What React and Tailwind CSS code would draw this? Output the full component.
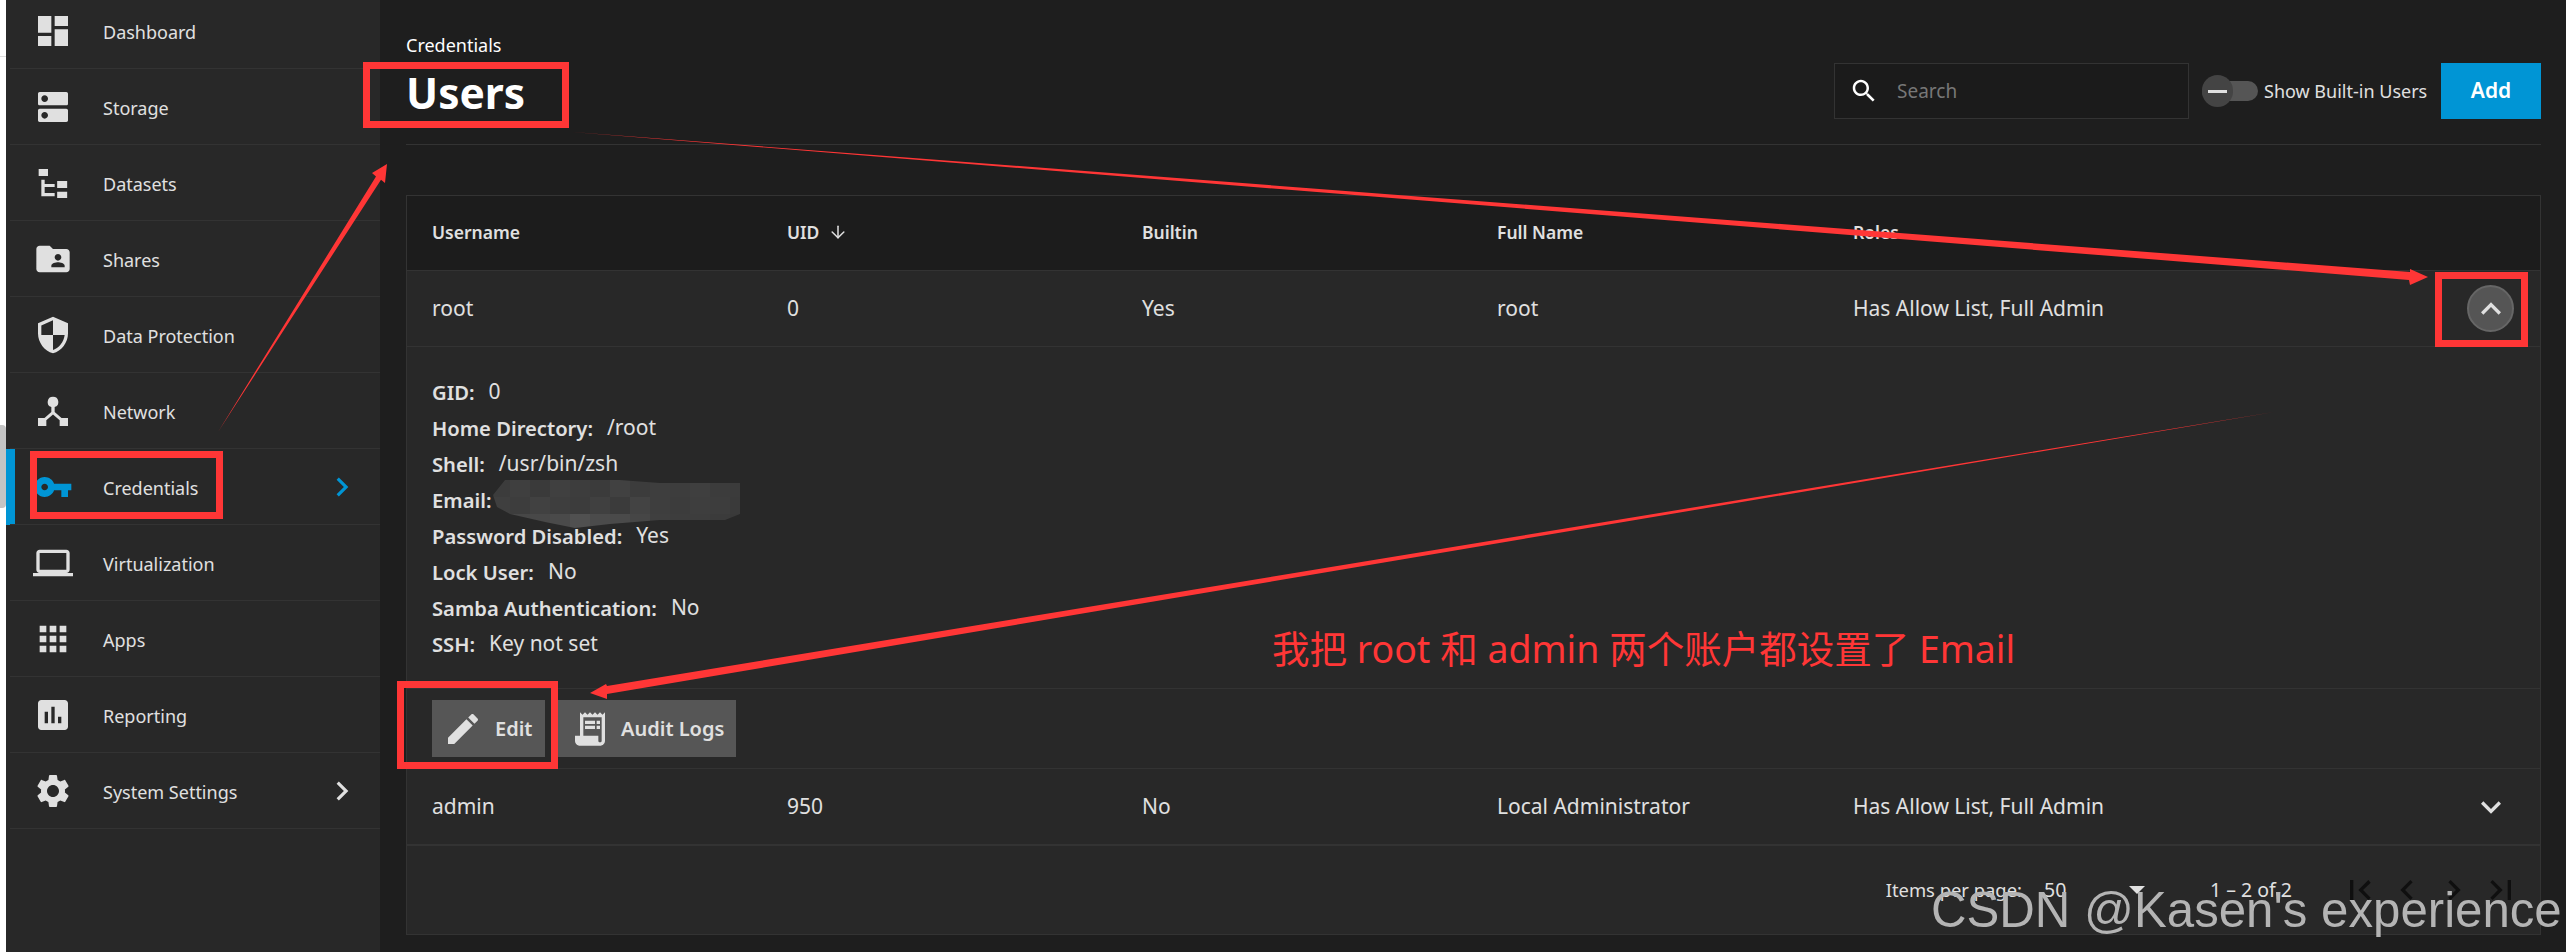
import React from 'react';
import { ArrowDown } from 'lucide-react';

const font = { fontFamily: '"Noto Sans", "Noto Sans CJK SC", sans-serif' };

const Icon = ({ d, size = 40, className = '', evenodd = false }) => (
  <svg width={size} height={size} viewBox="0 0 24 24" className={`shrink-0 fill-current ${className}`}>
    <path d={d} fillRule={evenodd ? 'evenodd' : 'nonzero'} />
  </svg>
);

const paths = {
  dashboard: 'M3 13h8V3H3v10zm0 8h8v-6H3v6zm10 0h8V11h-8v10zm0-18v6h8V3h-8z',
  storage:
    'M20 13H4c-.55 0-1 .45-1 1v6c0 .55.45 1 1 1h16c.55 0 1-.45 1-1v-6c0-.55-.45-1-1-1zM7 19c-1.1 0-2-.9-2-2s.9-2 2-2 2 .9 2 2-.9 2-2 2zM20 3H4c-.55 0-1 .45-1 1v6c0 .55.45 1 1 1h16c.55 0 1-.45 1-1V4c0-.55-.45-1-1-1zM7 9c-1.1 0-2-.9-2-2s.9-2 2-2 2 .9 2 2-.9 2-2 2z',
  datasets:
    'M3.4 3.6H9v4.2H3.4zM5 10h2v2.6h6v1.8H7V18h6v2H5zM14.5 10.8h6V15h-6zM14.5 17.2h6V21h-6z',
  shares:
    'M20 6h-8l-2-2H4c-1.1 0-1.99.9-1.99 2L2 18c0 1.1.9 2 2 2h16c1.1 0 2-.9 2-2V8c0-1.1-.9-2-2-2zm-5 3c1.1 0 2 .9 2 2s-.9 2-2 2-2-.9-2-2 .9-2 2-2zm4 8h-8v-1c0-1.33 2.67-2 4-2s4 .67 4 2v1z',
  protection:
    'M12 1L3 5v6c0 5.55 3.84 10.74 9 12 5.16-1.26 9-6.45 9-12V5l-9-4zm0 10.99h7c-.53 4.12-3.28 7.79-7 8.94V12H5V6.3l7-3.11v8.8z',
  network:
    'M12 3.4a3.2 3.2 0 0 1 1 6.24v2.9l4.1 3.66H21V21h-5v-3.4l-4-3.55-4 3.55V21H3v-4.8h3.9L11 12.54v-2.9A3.2 3.2 0 0 1 12 3.4z',
  key: 'M12.65 10C11.83 7.67 9.61 6 7 6c-3.31 0-6 2.69-6 6s2.69 6 6 6c2.61 0 4.83-1.67 5.65-4H17v4h4v-4h2v-4H12.65zM7 14c-1.1 0-2-.9-2-2s.9-2 2-2 2 .9 2 2-.9 2-2 2z',
  laptop:
    'M20 18c1.1 0 1.99-.9 1.99-2L22 6c0-1.1-.9-2-2-2H4c-1.1 0-2 .9-2 2v10c0 1.1.9 2 2 2H0v2h24v-2h-4zM4 6h16v10H4V6z',
  apps: 'M4 8h4V4H4v4zm6 12h4v-4h-4v4zm-6 0h4v-4H4v4zm0-6h4v-4H4v4zm6 0h4v-4h-4v4zm6-10v4h4V4h-4zm-6 4h4V4h-4v4zm6 6h4v-4h-4v4zm0 6h4v-4h-4v4z',
  reporting:
    'M19 3H5c-1.1 0-2 .9-2 2v14c0 1.1.9 2 2 2h14c1.1 0 2-.9 2-2V5c0-1.1-.9-2-2-2zM9 17H7v-7h2v7zm4 0h-2V7h2v10zm4 0h-2v-4h2v4z',
  settings:
    'M19.14 12.94c.04-.3.06-.61.06-.94 0-.32-.02-.64-.07-.94l2.03-1.58c.18-.14.23-.41.12-.61l-1.92-3.32c-.12-.22-.37-.29-.59-.22l-2.39.96c-.5-.38-1.03-.7-1.62-.94l-.36-2.54c-.04-.24-.24-.41-.48-.41h-3.84c-.24 0-.43.17-.47.41l-.36 2.54c-.59.24-1.13.57-1.62.94l-2.39-.96c-.22-.08-.47 0-.59.22L2.74 8.87c-.12.21-.08.47.12.61l2.03 1.58c-.05.3-.09.63-.09.94s.02.64.07.94l-2.03 1.58c-.18.14-.23.41-.12.61l1.92 3.32c.12.22.37.29.59.22l2.39-.96c.5.38 1.03.7 1.62.94l.36 2.54c.05.24.24.41.48.41h3.84c.24 0 .44-.17.47-.41l.36-2.54c.59-.24 1.13-.56 1.62-.94l2.39.96c.22.08.47 0 .59-.22l1.92-3.32c.12-.22.07-.47-.12-.61l-2.01-1.58zM12 15.6c-1.98 0-3.6-1.62-3.6-3.6s1.62-3.6 3.6-3.6 3.6 1.62 3.6 3.6-1.62 3.6-3.6 3.6z',
  chevronRight: 'M10 6L8.59 7.41 13.17 12l-4.58 4.59L10 18l6-6z',
  chevronLeft: 'M15.41 7.41L14 6l-6 6 6 6 1.41-1.41L10.83 12z',
  expandLess: 'M12 8l-6 6 1.41 1.41L12 10.83l4.59 4.58L18 14z',
  expandMore: 'M16.59 8.59L12 13.17 7.41 8.59 6 10l6 6 6-6z',
  firstPage: 'M18.41 16.59L13.82 12l4.59-4.41L17 6l-6 6 6 6zM6 6h2v12H6z',
  lastPage: 'M5.59 7.41L10.18 12l-4.59 4.59L7 18l6-6-6-6zM16 6h2v12h-2z',
  search:
    'M15.5 14h-.79l-.28-.27C15.41 12.59 16 11.11 16 9.5 16 5.91 13.09 3 9.5 3S3 5.91 3 9.5 5.91 16 9.5 16c1.61 0 3.09-.59 4.23-1.57l.27.28v.79l5 4.99L20.49 19l-4.99-5zm-6 0C7.01 14 5 11.99 5 9.5S7.01 5 9.5 5 14 7.01 14 9.5 11.99 14 9.5 14z',
  edit: 'M3 17.25V21h3.75L17.81 9.94l-3.75-3.75L3 17.25zM20.71 7.04c.39-.39.39-1.02 0-1.41l-2.34-2.34c-.39-.39-1.02-.39-1.41 0l-1.83 1.83 3.75 3.75 1.83-1.83z',
  audit:
    'M19.5 3.5L18 2l-1.5 1.5L15 2l-1.5 1.5L12 2l-1.5 1.5L9 2 7.5 3.5 6 2v14H3v3c0 1.66 1.34 3 3 3h12c1.66 0 3-1.34 3-3V2l-1.5 1.5zM19 19c0 .55-.45 1-1 1s-1-.45-1-1v-3H8V5h11v14zM9 7h6v2H9zM16 7h2v2h-2zM9 10h6v2H9zM16 10h2v2h-2z',
};

const navItems = [
  { label: 'Dashboard', icon: paths.dashboard },
  { label: 'Storage', icon: paths.storage, evenodd: true },
  { label: 'Datasets', icon: paths.datasets },
  { label: 'Shares', icon: paths.shares },
  { label: 'Data Protection', icon: paths.protection },
  { label: 'Network', icon: paths.network },
  { label: 'Credentials', icon: paths.key, active: true, arrow: true },
  { label: 'Virtualization', icon: paths.laptop },
  { label: 'Apps', icon: paths.apps },
  { label: 'Reporting', icon: paths.reporting },
  { label: 'System Settings', icon: paths.settings, arrow: true },
];

const details = [
  ['GID:', '0'],
  ['Home Directory:', '/root'],
  ['Shell:', '/usr/bin/zsh'],
  ['Email:', ''],
  ['Password Disabled:', 'Yes'],
  ['Lock User:', 'No'],
  ['Samba Authentication:', 'No'],
  ['SSH:', 'Key not set'],
];

const mosaic = [
  ['#3c3c3c', '#3f3f3f', '#3a3a3a', '#404040', '#3d3d3d', '#3b3b3b', '#414141', '#3c3c3c', '#3e3e3e', '#3d3d3d', '#3f3f3f', '#3c3c3c', '#3b3b3b'],
  ['#3f3f3f', '#3d3d3d', '#414141', '#3e3e3e', '#3c3c3c', '#404040', '#3b3b3b', '#434343', '#3e3e3e', '#3c3c3c', '#3e3e3e', '#3d3d3d', '#3a3a3a'],
  ['#444444', '#474747', '#484848', '#4a4a4a', '#505050', '#4b4b4b', '#4a4a4a', '#464646', '#3f3f3f', '#3d3d3d', '#3d3d3d', '#3b3b3b', '#393939'],
];

const Row = ({ cells, children }) => (
  <div className="grid h-[76px] grid-cols-[355px_355px_355px_356px_1fr] items-center border-b border-[#333333] bg-[#282828] pl-[25px] text-[21px] text-[#e0e0e0]">
    {cells.map((c) => (
      <div key={c}>{c}</div>
    ))}
    {children}
  </div>
);

const Annotations = () => (
  <svg width="2566" height="952" viewBox="0 0 2566 952" className="pointer-events-none absolute left-0 top-0">
    <g fill="none" stroke="#ff3636" strokeWidth="7">
      <rect x="366.5" y="65.5" width="199" height="59" />
      <rect x="33.5" y="454.5" width="186" height="61" />
      <rect x="400.5" y="684.5" width="154" height="81" />
      <rect x="2438.5" y="275.5" width="86" height="68" />
    </g>
    <g fill="#ff3636">
      <polygon points="572,132 2410,272 2410,269 2428,277 2410,285 2409,280" />
      <polygon points="2274,412 607,694 607,699 590,693 606,684 607,686" />
      <polygon points="218,432 376,176.5 372,173 387,164 385,183 381,179.7" />
    </g>
    <defs>
      <clipPath id="blur-shape">
        <path d="M505 480 H620 L660 483 H740 V514 L725 520 H660 L610 524 L575 528 L545 522 L510 514 L497 507 L493 495 Z" />
      </clipPath>
    </defs>
    <g clipPath="url(#blur-shape)">
      {mosaic.map((row, r) =>
        row.map((color, c) => <rect key={`${r}-${c}`} x={490 + c * 20} y={480 + r * 17} width="20" height="17" fill={color} />),
      )}
    </g>
  </svg>
);

export default function App() {
  return (
    <div className="relative flex h-[952px] w-[2566px] overflow-hidden bg-[#1e1e1e]" style={font}>
      <div className="relative w-[6px] shrink-0 bg-white">
        <div className="absolute left-0 top-[56px] h-px w-full bg-[#dddddd]" />
        <div className="absolute left-0 top-[425px] h-[83px] w-full rounded-r-[4px] bg-[#c4c4c4]" />
      </div>

      <aside className="h-full w-[374px] shrink-0 bg-[#282828]">
        <nav className="-mt-[7px]">
          {navItems.map((item) => (
            <div key={item.label} className="relative flex h-[76px] items-center pl-[27px] text-[18px] text-[#e0e0e0]">
              {item.active && <div className="absolute bottom-0 left-0 top-0 w-[9px] bg-[#0095d5]" />}
              <div className="absolute bottom-0 left-[4px] right-0 h-px bg-[#333333]" />
              <Icon d={item.icon} evenodd={item.evenodd} className={item.active ? 'text-[#0095d5]' : 'text-[#e0e0e0]'} />
              <span className="ml-[30px] mt-[2px]">{item.label}</span>
              {item.arrow && (
                <Icon
                  d={paths.chevronRight}
                  size={38}
                  className={`absolute left-[317px] ${item.active ? 'text-[#0095d5]' : 'text-[#e0e0e0]'}`}
                />
              )}
            </div>
          ))}
        </nav>
      </aside>

      <main className="min-w-0 flex-1 pl-[26px] pr-[25px]">
        <header className="flex h-[145px] items-start justify-between border-b border-[#333333]">
          <div className="pt-[32px] text-white">
            <div className="text-[18px] leading-[26px]">Credentials</div>
            <h1 className="mt-[5px] text-[42.5px] font-bold leading-[60px]">Users</h1>
          </div>
          <div className="flex items-center pt-[63px]">
            <div className="flex h-[56px] w-[355px] items-center border border-[#333333] bg-[#1b1b1b] pl-[14px] text-[19px] text-[#777777]">
              <Icon d={paths.search} size={30} className="text-white" />
              <span className="ml-[18px]">Search</span>
            </div>
            <div className="relative ml-[13px] h-[20px] w-[56px] rounded-full bg-[#555555]">
              <div className="absolute left-0 top-[-6px] flex h-[32px] w-[31px] items-center justify-center rounded-full bg-[#444444]">
                <div className="h-[3px] w-[19px] bg-[#e0e0e0]" />
              </div>
            </div>
            <span className="ml-[6px] w-[177px] whitespace-nowrap text-[18px] text-[#e0e0e0]">Show Built-in Users</span>
            <button className="h-[56px] w-[100px] bg-[#0095d5] text-[21px] font-semibold text-white">Add</button>
          </div>
        </header>

        <section className="mt-[50px] border border-[#333333] bg-[#282828]">
          <div className="grid h-[75px] grid-cols-[355px_355px_355px_356px_1fr] items-center border-b border-[#333333] bg-[#1c1c1c] pb-[2px] pl-[25px] text-[17.5px] font-semibold text-[#e0e0e0]">
            <div>Username</div>
            <div className="flex items-center gap-[9px]">
              UID <ArrowDown size={20} strokeWidth={1.8} />
            </div>
            <div>Builtin</div>
            <div>Full Name</div>
            <div>Roles</div>
          </div>

          <Row cells={['root', '0', 'Yes', 'root', 'Has Allow List, Full Admin']}>
            <div className="absolute left-[2467px] flex h-[47px] w-[47px] items-center justify-center rounded-full border-2 border-[#666666] bg-[#555555]">
              <Icon d={paths.expandLess} className="text-[#e0e0e0]" />
            </div>
          </Row>

          <div className="border-b border-[#333333] pb-[26px] pl-[25px] pt-[27px] text-[#e0e0e0]">
            {details.map(([label, value]) => (
              <div key={label} className="flex h-[36px] items-center">
                <span className="text-[20.2px] font-semibold">{label}</span>
                <span className="ml-[14px] text-[21px]">{value}</span>
              </div>
            ))}
          </div>

          <div className="flex h-[80px] gap-[13px] border-b border-[#333333] pl-[25px] pt-[11px] text-[20px] font-semibold text-[#e0e0e0]">
            <button className="flex h-[57px] w-[113px] items-center bg-[#565656] pl-[11px]">
              <Icon d={paths.edit} />
              <span className="ml-[12px]">Edit</span>
            </button>
            <button className="flex h-[57px] w-[178px] items-center bg-[#565656] pl-[12px]">
              <Icon d={paths.audit} />
              <span className="ml-[11px]">Audit Logs</span>
            </button>
          </div>

          <Row cells={['admin', '950', 'No', 'Local Administrator', 'Has Allow List, Full Admin']}>
            <div className="absolute left-[2471px] text-[#e0e0e0]">
              <Icon d={paths.expandMore} />
            </div>
          </Row>

          <div className="flex h-[89px] items-center justify-end border-t border-[#333333] pr-[19px] text-[19.5px] text-[#e0e0e0]">
            <span className="text-[18.4px]">Items per page:</span>
            <div className="ml-[22px] flex w-[162px] items-center">
              <span className="w-[85px]">50</span>
              <div className="h-0 w-0 border-x-[8px] border-t-[8px] border-x-transparent border-t-[#e0e0e0]" />
            </div>
            <span className="ml-[4px] w-[130px]">1 – 2 of 2</span>
            <div className="flex gap-[7px] text-[#0f0f0f]">
              <Icon d={paths.firstPage} />
              <Icon d={paths.chevronLeft} />
              <Icon d={paths.chevronRight} />
              <Icon d={paths.lastPage} />
            </div>
          </div>
        </section>
      </main>

      <Annotations />

      <div className="pointer-events-none absolute left-[1272px] top-[626px] whitespace-nowrap text-[37.5px] leading-[46px] text-[#ff3636]">
        我把 root 和 admin 两个账户都设置了 Email
      </div>
      <div
        className="pointer-events-none absolute left-[1931px] top-[882px] whitespace-nowrap text-[49.2px] leading-[56px] text-[#b4b4b4]"
        style={{ fontFamily: '"Liberation Sans", Arial, sans-serif' }}
      >
        CSDN @Kasen's experience
      </div>
    </div>
  );
}
